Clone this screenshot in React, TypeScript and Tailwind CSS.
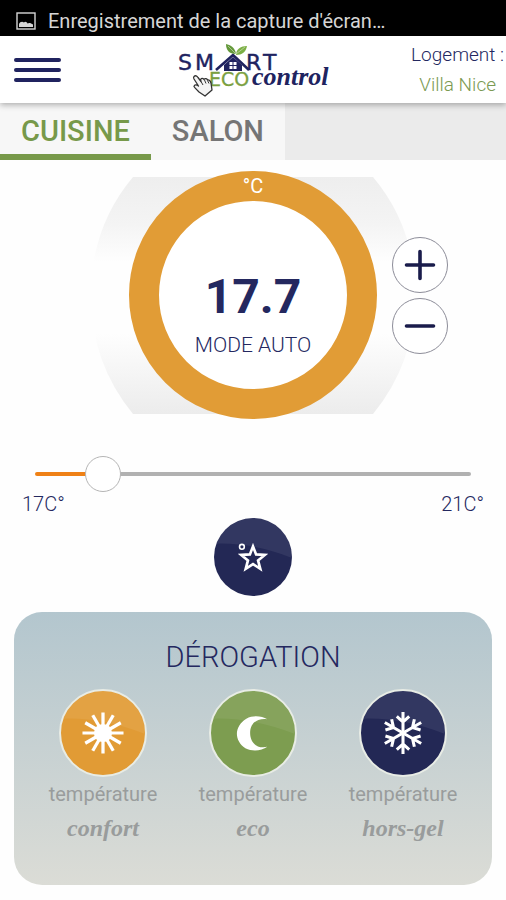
import React, { useState } from 'react';
import clsx from 'clsx';

const MIN = 17;
const MAX = 21;
const THUMB = 36;

function Logo() {
  return (
    <svg viewBox="0 0 152 56" className="block h-14 w-[152px]" role="img" aria-label="Smart Eco Control">
      <g fill="#20235f" stroke="#20235f" strokeWidth="0.4" fontFamily="'DejaVu Sans', sans-serif" fontSize="22">
        <text x="1" y="28">S</text>
        <text x="18" y="28">M</text>
        <text x="69" y="28">R</text>
        <text x="86" y="28">T</text>
      </g>
      {/* House standing in for the letter A */}
      <path d="M39 28 56 13 72 28" fill="none" stroke="#20235f" strokeWidth="2.6" />
      <path d="M47 23 56 15 65 23V29H47z" fill="#20235f" />
      <path d="M52.500 20h3v3h-3zM56.500 20h3v3h-3zM52.500 24h3v3h-3zM56.500 24h3v3h-3z" fill="#fff" />
      <path d="M59 12C58 5 53 3 49 2 49 8 52 12 59 12z" fill="#63983a" />
      <path d="M59 13C59 7 64 4 70 4 69 10 65 13 59 13z" fill="#7caf45" />
      <path d="M51 4 59 12M68 5 59 12" stroke="#d7e8c6" strokeWidth="0.6" />
      <text x="32" y="44" fill="#7ba03f" stroke="#7ba03f" strokeWidth="0.3" fontFamily="'DejaVu Sans', sans-serif" fontSize="19">
        ECO
      </text>
      <text
        x="75"
        y="43"
        fill="#20235f"
        fontFamily="'Liberation Serif', serif"
        fontSize="26"
        fontStyle="italic"
        fontWeight="700"
      >
        control
      </text>
      {/* Hand pointer */}
      <path
        d="M17 34.500C18.500 33 20 34 21 35.500L24 39.500 23.500 37.500C24.500 36 26 36 27 37.500 28 36 30 36.500 30.500 38 32 37.500 33.500 39 34 41L35 48 28 54 22 50C20 48 18 46 17 44.500 17.500 42.500 19.500 42.500 21.500 44L17 37C16.500 36 16.500 35 17 34.500z"
        fill="#f4f4f4"
        stroke="#333"
        strokeWidth="1.3"
        strokeLinejoin="round"
      />
      <path d="M24 39.500 26 43M27.500 38 29 41.500M30.500 38.500 32 41.500" stroke="#333" strokeWidth="1" />
    </svg>
  );
}

function Gloss() {
  return <path d="M0 29Q42 27 88 45V0H0z" fill="#fff" fillOpacity="0.07" />;
}

function SunIcon() {
  return (
    <g stroke="#fff" strokeWidth="3.4">
      <circle cx="44" cy="44" r="9.5" fill="#fff" stroke="none" />
      {[0, 30, 60, 90, 120, 150].map((angle) => (
        <path key={angle} d="M22.500 44H65.500" transform={`rotate(${angle} 44 44)`} />
      ))}
    </g>
  );
}

function MoonIcon() {
  return <path d="M59 29.500C53 26 44 25 37 29C24 37 24 52 36 60C44 64 53 62.500 59 58.500C48 61 41 54 41 44C41 34 48 28 59 29.500z" fill="#fff" />;
}

function SnowIcon() {
  return (
    <g stroke="#fff" strokeWidth="3.2" fill="none">
      {[0, 60, 120, 180, 240, 300].map((angle) => (
        <path key={angle} d="M44 44V22M37.500 26.500 44 32.500 50.500 26.500" transform={`rotate(${angle} 44 44)`} />
      ))}
    </g>
  );
}

const modes = [
  { name: 'confort', color: 'bg-[#e19b35]', Icon: SunIcon },
  { name: 'eco', color: 'bg-[#7d9d50]', Icon: MoonIcon },
  { name: 'hors-gel', color: 'bg-[#232855]', Icon: SnowIcon },
];

export default function App() {
  const [room, setRoom] = useState('CUISINE');
  const [target, setTarget] = useState(17.5);

  const change = (step: number) =>
    setTarget((value) => Math.min(MAX, Math.max(MIN, Math.round((value + step) * 10) / 10)));

  const ratio = (target - MIN) / (MAX - MIN);
  const fill = `calc(${THUMB / 2}px + (100% - ${THUMB}px) * ${ratio})`;

  return (
    <div className="min-h-screen bg-[#fefefe] pb-3 font-['Roboto',sans-serif] text-[#24285f]">
      {/* Status bar */}
      <div className="flex h-9 items-center gap-3 bg-black px-4 pt-1.5 text-[#d6d6d6]">
        <svg viewBox="0 0 20 18" className="h-[18px] w-5" aria-hidden="true">
          <rect x="1" y="1" width="18" height="16" fill="none" stroke="currentColor" strokeWidth="1.4" />
          <path d="M3 15V12C4 10 6 9 8 10.500 9 9 11 10 11.500 11.500 13 10.500 15 11 17 12.500V15z" fill="currentColor" />
        </svg>
        <span className="text-xl">Enregistrement de la capture d'écran…</span>
      </div>

      {/* Header */}
      <header className="relative grid h-[67px] grid-cols-[1fr_auto_1fr] items-center bg-white shadow-[0_2px_6px_rgba(0,0,0,0.3)]">
        <button type="button" aria-label="Menu" className="ml-3.5 flex w-[47px] flex-col gap-1.5">
          <span className="h-1 rounded-full bg-[#20235f]" />
          <span className="h-1 rounded-full bg-[#20235f]" />
          <span className="h-1 rounded-full bg-[#20235f]" />
        </button>
        <Logo />
        <div className="flex flex-col items-end pr-0.5 text-[19px] leading-[30px] font-light">
          <span>Logement :</span>
          <span className="pr-2 text-[#7b9a52]">Villa Nice</span>
        </div>
      </header>

      {/* Rooms */}
      <nav className="flex h-[57px] bg-[#ebebeb]">
        {['CUISINE', 'SALON'].map((item) => (
          <button
            key={item}
            type="button"
            onClick={() => setRoom(item)}
            className={clsx(
              'border-b-6 bg-[#f7f7f7] px-[21px] pt-1 text-[29px] leading-9 font-medium',
              room === item ? 'border-[#77994a] text-[#77994a]' : 'border-transparent text-[#757575]'
            )}
          >
            {item}
          </button>
        ))}
      </nav>

      <main>
        {/* Thermostat */}
        <section className="grid grid-cols-[1fr_auto_1fr] items-center pt-[11px]">
          <div className="relative col-start-2">
            <svg viewBox="0 0 324 237" className="absolute top-1.5 -left-[38px] h-[237px] w-[324px]" aria-hidden="true">
              <defs>
                <linearGradient id="plate" x1="0" y1="0" x2="0" y2="1">
                  <stop offset="0" stopColor="#eeeeee" />
                  <stop offset="0.2" stopColor="#f4f4f4" />
                  <stop offset="0.36" stopColor="#fefefe" />
                  <stop offset="0.66" stopColor="#fefefe" />
                  <stop offset="1" stopColor="#ececec" />
                </linearGradient>
              </defs>
              <path d="M42 0H282Q324 50 324 118T282 237H42Q0 186 0 118T42 0z" fill="url(#plate)" />
            </svg>
            <div className="relative flex h-[248px] w-[248px] flex-col items-center justify-center rounded-full border-30 border-[#e19c36] bg-white pt-11">
              <span className="absolute -top-[27px] text-xl leading-6 text-white">°C</span>
              <output className="text-5xl leading-14 font-bold">17.7</output>
              <span className="text-[21px] leading-10 font-light">MODE AUTO</span>
            </div>
          </div>
          <div className="relative flex flex-col gap-[5px] pl-[15px]">
            {[0.1, -0.1].map((step) => (
              <button
                key={step}
                type="button"
                aria-label={step > 0 ? 'Augmenter' : 'Diminuer'}
                onClick={() => change(step)}
                className="flex h-14 w-14 items-center justify-center rounded-full border border-[#8d8d99] bg-white"
              >
                <svg viewBox="0 0 32 32" className="h-8 w-8" fill="none" stroke="#1a1c4b" strokeWidth="3.6" strokeLinecap="round">
                  <path d={step > 0 ? 'M2.500 16h27M16 2.500v27' : 'M2.500 16h27'} />
                </svg>
              </button>
            ))}
          </div>
        </section>

        {/* Target temperature */}
        <section className="pt-[37px]">
          <input
            type="range"
            aria-label="Température de consigne"
            min={MIN}
            max={MAX}
            step={0.1}
            value={target}
            onChange={(e) => setTarget(Number(e.target.value))}
            style={{ '--fill': fill } as React.CSSProperties}
            className="mx-auto block h-9 w-[calc(100%-70px)] appearance-none bg-transparent [&::-webkit-slider-runnable-track]:h-1 [&::-webkit-slider-runnable-track]:rounded-full [&::-webkit-slider-runnable-track]:bg-[linear-gradient(to_right,#ef8116_var(--fill),#b1b1b1_var(--fill))] [&::-webkit-slider-thumb]:-mt-4 [&::-webkit-slider-thumb]:h-9 [&::-webkit-slider-thumb]:w-9 [&::-webkit-slider-thumb]:appearance-none [&::-webkit-slider-thumb]:rounded-full [&::-webkit-slider-thumb]:border [&::-webkit-slider-thumb]:border-solid [&::-webkit-slider-thumb]:border-[#b5b5b5] [&::-webkit-slider-thumb]:bg-white"
          />
          <div className="flex justify-between px-[22px] text-xl leading-6 font-light">
            <span>17C°</span>
            <span>21C°</span>
          </div>
        </section>

        <div className="flex justify-center pt-0.5">
          <button type="button" aria-label="Favori" className="h-[78px] w-[78px] overflow-hidden rounded-full bg-[#232855]">
            <svg viewBox="0 0 88 88" className="h-full w-full">
              <Gloss />
              <path
                d="M44 32 47.500 41.100 57.300 41.700 49.700 47.900 52.200 57.300 44 52 35.800 57.300 38.300 47.900 30.700 41.700 40.500 41.100z"
                fill="none"
                stroke="#fff"
                strokeWidth="3"
              />
              <circle cx="31.500" cy="32.500" r="2.700" fill="none" stroke="#fff" strokeWidth="1.800" />
            </svg>
          </button>
        </div>

        {/* Overrides */}
        <section className="mx-3.5 mt-4 rounded-[28px] bg-linear-to-b from-[#b3c6ce] to-[#dbdcd6] px-3.5 pt-6 pb-10">
          <h1 className="text-center text-[29px] leading-[42px] font-light">DÉROGATION</h1>
          <div className="mt-[11px] grid grid-cols-3">
            {modes.map(({ name, color, Icon }) => (
              <button key={name} type="button" className="flex flex-col items-center text-[#999c9c]">
                <span className={clsx('h-[88px] w-[88px] overflow-hidden rounded-full border-2 border-[#e8ece5]', color)}>
                  <svg viewBox="0 0 88 88" className="h-full w-full" aria-hidden="true">
                    <Gloss />
                    <Icon />
                  </svg>
                </span>
                <span className="text-xl leading-[34px]">température</span>
                <span className="font-['Liberation_Serif',serif] text-2xl leading-[34px] font-bold italic">{name}</span>
              </button>
            ))}
          </div>
        </section>
      </main>
    </div>
  );
}
